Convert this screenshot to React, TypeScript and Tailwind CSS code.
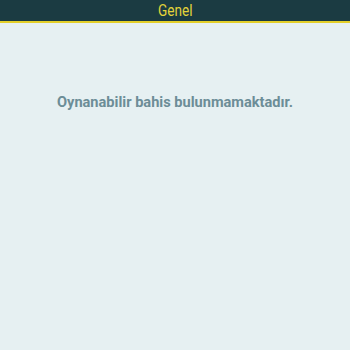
export default function App() {
  return (
    <div className="w-[350px] h-[350px] bg-[#e6f0f2] flex flex-col" style={{ fontFamily: "Roboto, 'Liberation Sans', sans-serif" }}>
      <div className="h-[23px] bg-[#1b3b42] flex items-center justify-center border-b-2 border-[#e3cf2a]">
        <span className="text-[#e3d33a] text-[16px] leading-none inline-block scale-x-[0.85]">Genel</span>
      </div>
      <div className="flex justify-center pt-[72px]">
        <span className="text-[#6c8d97] text-[14.6px] font-bold leading-none">Oynanabilir bahis bulunmamaktadır.</span>
      </div>
    </div>
  );
}
